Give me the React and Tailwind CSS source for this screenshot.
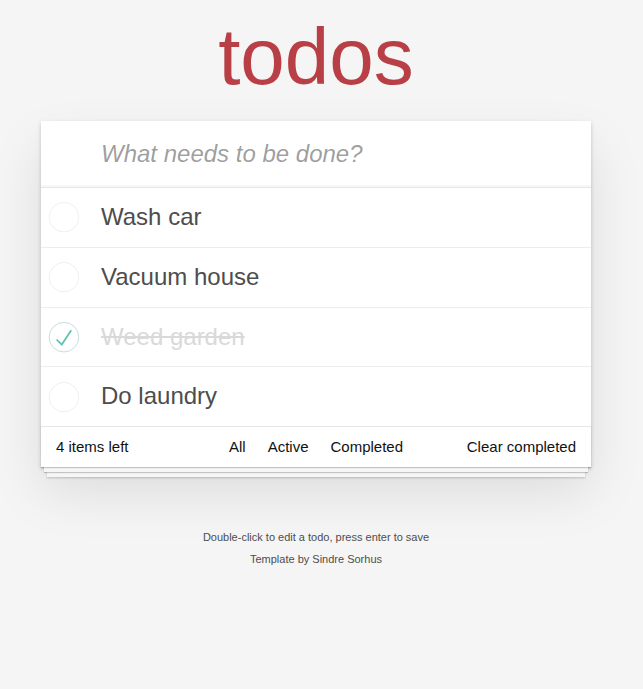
import React, { useState } from "react";

const todosSeed = [
  { id: 1, title: "Wash car", completed: false },
  { id: 2, title: "Vacuum house", completed: false },
  { id: 3, title: "Weed garden", completed: true },
  { id: 4, title: "Do laundry", completed: false },
];

// round toggle, same geometry as the classic todomvc background svg
const Toggle = ({ checked }) => (
  <svg width="40" height="40" viewBox="-10 -18 100 135" className="shrink-0">
    <circle
      cx="50"
      cy="50"
      r="50"
      fill="none"
      stroke={checked ? "#bddad5" : "#ededed"}
      strokeWidth="3"
    />
    {checked && (
      <path fill="#5dc2af" d="M72 25L42 71 27 56l-4 4 20 20 34-52z" />
    )}
  </svg>
);

const App = () => {
  const [todos, setTodos] = useState(todosSeed);

  const toggle = (id) =>
    setTodos(todos.map((t) => (t.id === id ? { ...t, completed: !t.completed } : t)));

  return (
    <div className="min-h-screen bg-[#f5f5f5] pt-[17px] font-['Liberation_Sans',Arial,sans-serif] text-[#111]">
      <div className="ml-[41px] w-[550px]">
        <h1 className="mb-[24px] text-center text-[80px] leading-[80px] text-[#b83f45]">
          todos
        </h1>

        <section className="bg-white shadow-[0_2px_4px_0_rgba(0,0,0,0.2),0_25px_50px_0_rgba(0,0,0,0.1)]">
          {/* new todo */}
          <input
            className="block h-[66px] w-full bg-transparent pl-[60px] pr-4 text-[24px] text-[#4d4d4d] outline-none shadow-[inset_0_-2px_1px_rgba(0,0,0,0.03)] placeholder:italic placeholder:text-black/40"
            placeholder="What needs to be done?"
          />

          <ul className="border-t border-[#e6e6e6]">
            {todos.map((todo, i) => (
              <li
                key={todo.id}
                onClick={() => toggle(todo.id)}
                className={
                  "flex items-center cursor-pointer " +
                  (i < todos.length - 1 ? "border-b border-[#ededed]" : "")
                }
              >
                <Toggle checked={todo.completed} />
                <span
                  className={
                    "py-[15px] pl-[20px] pr-[15px] text-[24px] leading-[1.2] " +
                    (todo.completed ? "text-[#d9d9d9] line-through" : "text-[#4d4d4d]")
                  }
                >
                  {todo.title}
                </span>
              </li>
            ))}
          </ul>

          {/* footer with the stacked paper look */}
          <footer className="relative flex h-[41px] items-center justify-between border-t border-[#e6e6e6] px-[15px] text-[15px] shadow-[0_1px_1px_rgba(0,0,0,0.2),0_8px_0_-3px_#f6f6f6,0_9px_1px_-3px_rgba(0,0,0,0.2),0_16px_0_-6px_#f6f6f6,0_17px_2px_-6px_rgba(0,0,0,0.2)]">
            <span>4 items left</span>
            <ul className="absolute inset-x-0 flex justify-center">
              <li>
                <a className="m-[3px] border border-transparent px-[7px] py-[3px]">All</a>
              </li>
              <li>
                <a className="m-[3px] border border-transparent px-[7px] py-[3px]">Active</a>
              </li>
              <li>
                <a className="m-[3px] border border-transparent px-[7px] py-[3px]">Completed</a>
              </li>
            </ul>
            <button className="relative">Clear completed</button>
          </footer>
        </section>

        <div className="mt-[65px] flex flex-col items-center gap-[11px] text-[11px] leading-none text-[#4d4d4d]">
          <p>Double-click to edit a todo, press enter to save</p>
          <p>Template by Sindre Sorhus</p>
        </div>
      </div>
    </div>
  );
};

export default App;
